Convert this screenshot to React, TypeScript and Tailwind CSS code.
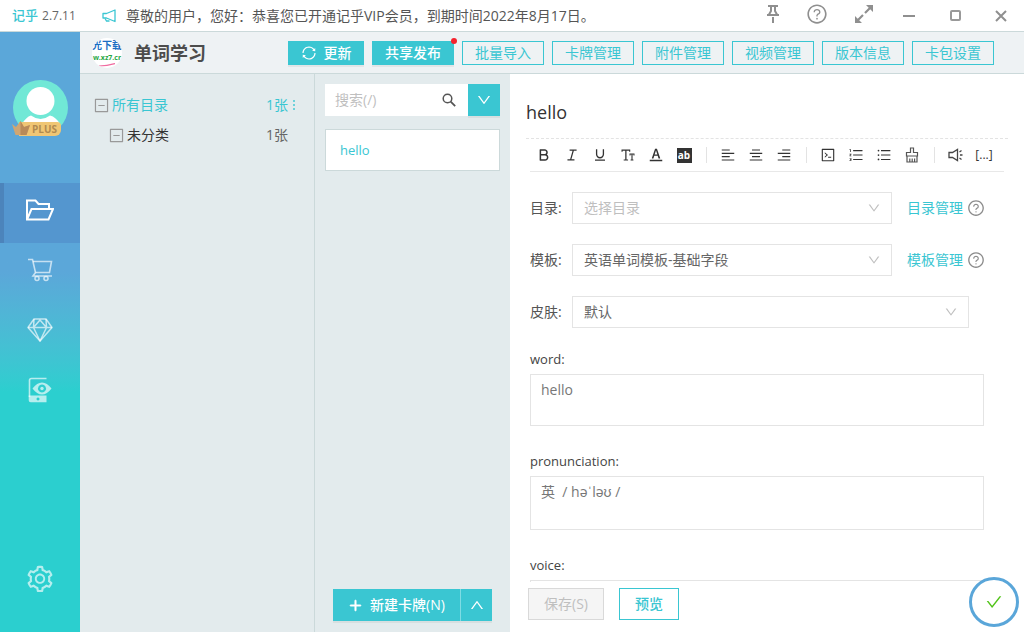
import { useState } from 'react'
import type { ReactNode } from 'react'
import {
  AiOutlineAlignCenter,
  AiOutlineAlignLeft,
  AiOutlineAlignRight,
  AiOutlineBold,
  AiOutlineCheck,
  AiOutlineCode,
  AiOutlineDown,
  AiOutlineFontColors,
  AiOutlineFontSize,
  AiOutlineItalic,
  AiOutlineMinusSquare,
  AiOutlineOrderedList,
  AiOutlinePlus,
  AiOutlineQuestionCircle,
  AiOutlineSetting,
  AiOutlineSync,
  AiOutlineUnderline,
  AiOutlineUnorderedList,
  AiOutlineUp,
} from 'react-icons/ai'

// ---------- icons ----------

function MegaphoneIcon() {
  return (
    <svg width="14" height="14" viewBox="0 0 14 14" fill="none" stroke="#3ac6d2" strokeWidth="1.3">
      <path d="M1 4.500h3.500L13 1v11.500L4.500 9H1z" strokeLinejoin="round" />
      <path d="M3 9.500l1.500 2.500h3" />
    </svg>
  )
}

function PinIcon() {
  return (
    <svg className="ml-1" width="14" height="20" viewBox="0 0 14 20" fill="none" stroke="#8f8f8f">
      <path d="M2 2h10M1 11h12" strokeWidth="2" />
      <path d="M5 2v5L3 10.500M9 2v5l2 3.500" strokeWidth="2" />
      <path d="M7 13v6" strokeWidth="2" />
    </svg>
  )
}

function ExpandIcon() {
  return (
    <svg className="ml-0.5" width="20" height="20" viewBox="0 0 20 20" fill="#8f8f8f" stroke="#8f8f8f">
      <path d="M11 9l6-6M3 17l6-6" strokeWidth="2.2" />
      <path d="M12 1h7v7zM1 12v7h7z" stroke="none" />
    </svg>
  )
}

function SearchIcon() {
  return (
    <svg className="shrink-0" width="14" height="14" viewBox="0 0 14 14" fill="none" stroke="#555" strokeWidth="1.5">
      <circle cx="5.500" cy="5.500" r="4.300" />
      <path d="M8.700 8.700l4.500 4.500" strokeWidth="1.800" />
    </svg>
  )
}

function BrushIcon() {
  return (
    <svg width="14" height="16" viewBox="0 0 14 16" fill="none" stroke="#555" strokeWidth="1.2">
      <path d="M5.500 5.500V1h3v4.500h4v3.500h-11V5.500z" />
      <path d="M2 9v6h10V9M4.800 11.500V15M7.200 11.500V15M9.600 11.500V15" />
    </svg>
  )
}

function SoundIcon() {
  return (
    <svg width="16" height="14" viewBox="0 0 16 14" fill="none" stroke="#444" strokeWidth="1.3">
      <path d="M1 4.500h3.500L9.500 1.500v11L4.500 9.500H1z" />
      <path d="M11.500 4l2-1.500M12 7h2.500M11.500 10l2 1.500" />
    </svg>
  )
}

function FolderIcon() {
  return (
    <svg width="28" height="22" viewBox="0 0 28 22" fill="none" stroke="currentColor" strokeWidth="2">
      <path d="M1 20.500V1.500h8.500l3 3.500H23v4.500" />
      <path d="M1 20.500L5.500 10H27l-4.500 10.500z" />
    </svg>
  )
}

function CartIcon() {
  return (
    <svg width="26" height="24" viewBox="0 0 26 24" fill="none" stroke="currentColor" strokeWidth="1.6">
      <path d="M1 1.500h4.500L8.500 14.500 6 18h19" />
      <path d="M6 3.500h18.500L22.500 14.500h-14" />
      <circle cx="10" cy="20.500" r="2" />
      <circle cx="19" cy="20.500" r="2" />
    </svg>
  )
}

function DiamondIcon() {
  return (
    <svg width="26" height="24" viewBox="0 0 26 24" fill="none" stroke="currentColor" strokeWidth="1.5" strokeLinejoin="round">
      <path d="M7 1h12l6 8.500L13 23 1 9.500z" />
      <path d="M1 9.500h24M7 1l-.5 8.500L13 23l6.500-13.500L19 1M6.500 9.500L13 2l6.500 7.500" />
    </svg>
  )
}

function DeviceIcon() {
  return (
    <svg width="24" height="26" viewBox="0 0 24 26" fill="none">
      <path d="M18.500 1.500H3.500Q1.500 1.500 1.500 3.500V20" stroke="currentColor" strokeWidth="1.600" />
      <path
        d="M.7 18.500h17.800v6.800H2.700Q.7 25.300.7 23.300zM10 20.500a1.500 1.500 0 1 0 .01 0z"
        fill="currentColor"
        fillRule="evenodd"
      />
      <path
        d="M4.500 11.500Q9 5.500 14 5.500t9.500 6Q19 17.500 14 17.500t-9.500-6zM14 7.500a4 4 0 1 0 .01 0z"
        fill="currentColor"
        fillRule="evenodd"
      />
      <circle cx="14" cy="11.500" r="1.700" fill="currentColor" />
    </svg>
  )
}

// ---------- title bar ----------

function WindowButton({ label, children }: { label: string; children: ReactNode }) {
  return (
    <button type="button" aria-label={label} className="flex w-[46px] items-center justify-center text-[#8f8f8f]">
      {children}
    </button>
  )
}

function TitleBar() {
  return (
    <header className="flex h-8 shrink-0 items-center border-b border-[#cbd9da] bg-white pl-3">
      <span className="text-[13px] font-medium text-[#3ac6d2]">记乎</span>
      <span className="ml-1 w-[60px] text-xs text-[#666]">2.7.11</span>
      <MegaphoneIcon />
      <p className="ml-2.5 flex-1 truncate text-[#555]">
        尊敬的用户，您好：恭喜您已开通记乎VIP会员，到期时间2022年8月17日。
      </p>
      <div className="flex h-full pb-1">
        <WindowButton label="置顶"><PinIcon /></WindowButton>
        <WindowButton label="帮助"><AiOutlineQuestionCircle size={22} /></WindowButton>
        <WindowButton label="全屏"><ExpandIcon /></WindowButton>
        <WindowButton label="最小化"><span className="mt-1 h-0.5 w-3 bg-[#8f8f8f]" /></WindowButton>
        <WindowButton label="最大化"><span className="mt-1 size-[11px] rounded-xs border-2 border-[#999]" /></WindowButton>
        <WindowButton label="关闭">
          <svg className="mt-1" width="12" height="12" viewBox="0 0 12 12" stroke="#8f8f8f" strokeWidth="2">
            <path d="M1 1l10 10M11 1L1 11" />
          </svg>
        </WindowButton>
      </div>
    </header>
  )
}

// ---------- side bar ----------

function Avatar() {
  return (
    <div className="relative mt-12 ml-[13px] size-[55px]">
      <svg width="55" height="55" viewBox="0 0 55 55">
        <defs>
          <clipPath id="avatar-clip"><circle cx="27.500" cy="27.500" r="27.500" /></clipPath>
        </defs>
        <g clipPath="url(#avatar-clip)">
          <rect width="55" height="55" fill="#71e8d6" />
          <path d="M9 44Q13 37 18 35.500q9.500 7 19 0Q43 37 47 44v11H9z" fill="#fff" />
          <circle cx="27.500" cy="21" r="14" fill="#fff" />
        </g>
      </svg>
      <span className="absolute top-[42px] left-1.5 flex h-3.5 w-[42px] items-center justify-end rounded-tr-sm rounded-br-md bg-[#f0c674] pr-1 text-[10px] font-bold text-[#b08a50]">
        PLUS
      </span>
      <svg className="absolute top-[41px] -left-px" width="18" height="15" viewBox="0 0 18 15">
        <path d="M0 3l4 3 4.500-6L12 6l6-2-3.500 10h-11z" fill="#d0a673" />
        <path d="M8.500 0L12 6l6-2-3.500 10h-6z" fill="#b98a58" />
      </svg>
    </div>
  )
}

const navItems = [
  { label: '卡包', icon: <FolderIcon />, active: true },
  { label: '商城', icon: <CartIcon />, active: false },
  { label: '会员', icon: <DiamondIcon />, active: false },
  { label: '浏览', icon: <DeviceIcon />, active: false },
]

function SideBar() {
  return (
    <aside className="flex w-20 shrink-0 flex-col bg-linear-to-b from-[#5ba7d9] from-40% to-[#2bcfcf] to-60%">
      <Avatar />
      <nav className="mt-12 flex flex-col">
        {navItems.map(item => (
          <button
            key={item.label}
            type="button"
            aria-label={item.label}
            className={
              item.active
                ? 'flex h-[60px] items-center justify-center border-l-4 border-[#4c84bb] bg-[#5496cf] pr-1 pb-1.5 text-white'
                : 'flex h-[60px] items-center justify-center pb-1.5 text-white/65'
            }
          >
            {item.icon}
          </button>
        ))}
      </nav>
      <button type="button" aria-label="设置" className="mt-auto mb-[23px] flex h-[60px] items-center justify-center text-white/65">
        <AiOutlineSetting size={30} />
      </button>
    </aside>
  )
}

// ---------- header ----------

const headerActions = ['批量导入', '卡牌管理', '附件管理', '视频管理', '版本信息', '卡包设置']

function DeckHeader() {
  return (
    <div className="flex h-[42px] shrink-0 items-center border-b border-[#cbd9da] bg-[#eef2f4] pr-[30px] pl-3">
      <div className="flex size-[30px] flex-col items-center overflow-hidden rounded-full bg-white whitespace-nowrap">
        <span className="text-[10px] leading-[15px] font-bold text-[#1d6fc4]">光下载</span>
        <span className="text-[7px] leading-[10px] font-bold text-[#27a844]">w.xz7.cr</span>
        <svg width="16" height="4" viewBox="0 0 16 4" fill="none" stroke="#f06ba0">
          <path d="M0 3Q8 3 16 .5" strokeWidth="1.200" />
        </svg>
      </div>
      <h1 className="ml-3 flex-1 truncate text-lg font-bold text-[#4c4c4c]">单词学习</h1>
      <div className="flex gap-2">
        <button type="button" className="flex h-6 w-[76px] items-center justify-center gap-[7px] bg-[#3ac6d2] font-medium text-white shadow-[0_2px_0_rgba(0,0,0,0.05)]">
          <AiOutlineSync size={16} />
          更新
        </button>
        <button type="button" className="relative h-6 w-[82px] bg-[#3ac6d2] font-medium text-white shadow-[0_2px_0_rgba(0,0,0,0.05)]">
          共享发布
          <span className="absolute -top-[3px] -right-[3px] size-1.5 rounded-full bg-[#f5222d]" />
        </button>
        {headerActions.map(label => (
          <button key={label} type="button" className="h-6 w-[82px] border border-[#3ac6d2] text-[#3ac6d2]">
            {label}
          </button>
        ))}
      </div>
    </div>
  )
}

// ---------- catalogue and card list ----------

function CatalogTree() {
  return (
    <section className="w-[235px] shrink-0 border-r border-[#cbd9da] pt-4">
      <div className="flex h-[30px] items-center pl-[13px] text-[#3ac6d2]">
        <AiOutlineMinusSquare size={17} className="mr-0.5 text-[#999]" />
        <span className="flex-1">所有目录</span>
        <span>1张</span>
        <button type="button" aria-label="更多" className="mr-[18px] ml-1 flex w-1 flex-col items-center gap-0.5">
          <span className="size-0.5 bg-[#3ac6d2]/70" />
          <span className="size-0.5 bg-[#3ac6d2]/70" />
          <span className="size-0.5 bg-[#3ac6d2]/70" />
        </button>
      </div>
      <div className="flex h-[30px] items-center pr-[26px] pl-7 text-[#333]">
        <AiOutlineMinusSquare size={17} className="mr-0.5 text-[#999]" />
        <span className="flex-1">未分类</span>
        <span className="text-[#666]">1张</span>
      </div>
    </section>
  )
}

function CardList() {
  return (
    <section className="flex w-[195px] shrink-0 flex-col px-2.5 pt-2.5 pb-[11px]">
      <div className="flex h-8">
        <label className="flex min-w-0 flex-1 items-center bg-white pr-3 pl-2.5">
          <input
            type="text"
            aria-label="搜索"
            placeholder="搜索(/)"
            className="w-full min-w-0 outline-none placeholder:text-[#bfbfbf]"
          />
          <SearchIcon />
        </label>
        <button type="button" aria-label="筛选" className="flex w-8 items-center justify-center bg-[#3ac6d2] text-white shadow-[0_2px_0_rgba(0,0,0,0.05)]">
          <AiOutlineDown size={16} />
        </button>
      </div>
      <ul className="mt-[13px] flex-1">
        <li>
          <a href="#hello" className="flex h-[42px] items-center border border-[#ccd9da] bg-white px-3.5 text-[13px] text-[#3ac6d2]">
            hello
          </a>
        </li>
      </ul>
      <div className="mx-2 flex h-8 text-white shadow-[0_2px_0_rgba(0,0,0,0.05)]">
        <button type="button" className="flex flex-1 items-center justify-center gap-[7px] bg-[#3ac6d2] font-medium">
          <AiOutlinePlus size={15} strokeWidth={60} />
          新建卡牌(N)
        </button>
        <button type="button" aria-label="展开" className="flex w-8 items-center justify-center border-l border-[#7fdce4] bg-[#3ac6d2]">
          <AiOutlineUp size={16} />
        </button>
      </div>
    </section>
  )
}

// ---------- editor ----------

const toolGroups = [
  [
    { label: '加粗', icon: <AiOutlineBold /> },
    { label: '斜体', icon: <AiOutlineItalic /> },
    { label: '下划线', icon: <AiOutlineUnderline /> },
    { label: '字号', icon: <AiOutlineFontSize /> },
    { label: '文字颜色', icon: <AiOutlineFontColors /> },
    {
      label: '背景颜色',
      icon: <span className="flex size-[15px] items-center justify-center bg-[#333] text-[10px] leading-none font-bold text-white">ab</span>,
    },
  ],
  [
    { label: '左对齐', icon: <AiOutlineAlignLeft /> },
    { label: '居中', icon: <AiOutlineAlignCenter /> },
    { label: '右对齐', icon: <AiOutlineAlignRight /> },
  ],
  [
    { label: '代码', icon: <AiOutlineCode /> },
    { label: '有序列表', icon: <AiOutlineOrderedList /> },
    { label: '无序列表', icon: <AiOutlineUnorderedList /> },
    { label: '清除格式', icon: <BrushIcon /> },
  ],
  [
    { label: '语音', icon: <SoundIcon /> },
    { label: '填空', icon: <span className="text-xs">[...]</span> },
  ],
]

function Toolbar() {
  return (
    <div className="mx-5 flex h-[33px] shrink-0 items-center border-b border-[#e8e8e8] text-base text-[#333]">
      {toolGroups.map((group, index) => (
        <div key={index} className={index > 0 ? 'ml-2 flex border-l border-[#e3e3e3] pl-[7px]' : 'flex'}>
          {group.map(tool => (
            <button key={tool.label} type="button" aria-label={tool.label} className="flex h-4 w-7 items-center justify-center">
              {tool.icon}
            </button>
          ))}
        </div>
      ))}
    </div>
  )
}

interface SelectRowProps {
  id: string
  label: string
  value: string
  placeholder?: boolean
  link?: string
}

function SelectRow({ id, label, value, placeholder, link }: SelectRowProps) {
  return (
    <div className="flex h-8 items-center">
      <label htmlFor={id} className="w-[42px] shrink-0 text-[#555]">{label}:</label>
      <div className={link ? 'relative flex-1' : 'relative mr-[15px] flex-1'}>
        <select
          id={id}
          className={
            placeholder
              ? 'h-8 w-full appearance-none border border-[#e4e4e4] bg-white px-[11px] text-[#bfbfbf]'
              : 'h-8 w-full appearance-none border border-[#e4e4e4] bg-white px-[11px] text-[#666]'
          }
        >
          <option>{value}</option>
        </select>
        <AiOutlineDown size={14} className="pointer-events-none absolute top-[9px] right-[11px] text-[#bfbfbf]" />
      </div>
      {link && (
        <div className="-mr-px flex w-[93px] items-center justify-between pl-[15px]">
          <a href={`#${id}`} className="text-[#3ac6d2]">{link}</a>
          <button type="button" aria-label={`${link}说明`} className="text-[#8c8c8c]">
            <AiOutlineQuestionCircle size={18} />
          </button>
        </div>
      )}
    </div>
  )
}

function FieldBox({ id, initial, height }: { id: string; initial: string; height: string }) {
  const [text, setText] = useState(initial)

  return (
    <div className="flex flex-col">
      <label htmlFor={id} className="text-[13px] leading-5 text-[#444]">{id}:</label>
      <textarea
        id={id}
        value={text}
        onChange={e => setText(e.target.value)}
        className={`mt-[5px] resize-none border border-[#e4e4e4] px-2.5 py-[5px] text-[#777] outline-none ${height}`}
      />
    </div>
  )
}

function Editor() {
  return (
    <main className="flex min-w-0 flex-1 flex-col bg-white">
      <h2 className="mx-4 flex h-[65px] shrink-0 items-center border-b border-dashed border-[#e3e3e3] pt-3 text-lg text-[#333]">
        hello
      </h2>
      <Toolbar />
      <form className="min-h-0 flex-1 overflow-hidden pt-5 pr-10 pl-5">
        <div className="flex flex-col gap-5">
          <SelectRow id="catalog" label="目录" value="选择目录" placeholder link="目录管理" />
          <SelectRow id="template" label="模板" value="英语单词模板-基础字段" link="模板管理" />
          <SelectRow id="skin" label="皮肤" value="默认" />
        </div>
        <div className="mt-[21px] flex flex-col gap-[25px]">
          <FieldBox id="word" initial="hello" height="h-[52px]" />
          <FieldBox id="pronunciation" initial="英  / həˈləʊ /" height="h-[54px]" />
          <FieldBox id="voice" initial="" height="h-[52px]" />
        </div>
      </form>
      <footer className="flex h-[50px] shrink-0 items-start gap-[15px] pt-1.5 pl-[18px]">
        <button type="button" disabled className="h-8 w-[76px] border border-[#d9d9d9] bg-[#f5f5f5] text-[#bfbfbf]">
          保存(S)
        </button>
        <button type="button" className="h-8 w-[60px] border border-[#3ac6d2] bg-white font-medium text-[#3ac6d2]">
          预览
        </button>
      </footer>
    </main>
  )
}

export default function App() {
  return (
    <div className="flex h-screen flex-col overflow-hidden bg-[#e3ebed] font-['Open_Sans','Noto_Sans_CJK_SC',sans-serif] text-sm">
      <TitleBar />
      <div className="flex min-h-0 flex-1">
        <SideBar />
        <div className="flex min-w-0 flex-1 flex-col">
          <DeckHeader />
          <div className="flex min-h-0 flex-1">
            <CatalogTree />
            <CardList />
            <Editor />
          </div>
        </div>
      </div>
      <button
        type="button"
        aria-label="完成"
        className="fixed right-[5px] bottom-[5px] flex size-[50px] items-center justify-center rounded-full border-3 border-[#5aa6d9] bg-white text-[#52c41a]"
      >
        <AiOutlineCheck size={18} />
      </button>
    </div>
  )
}
